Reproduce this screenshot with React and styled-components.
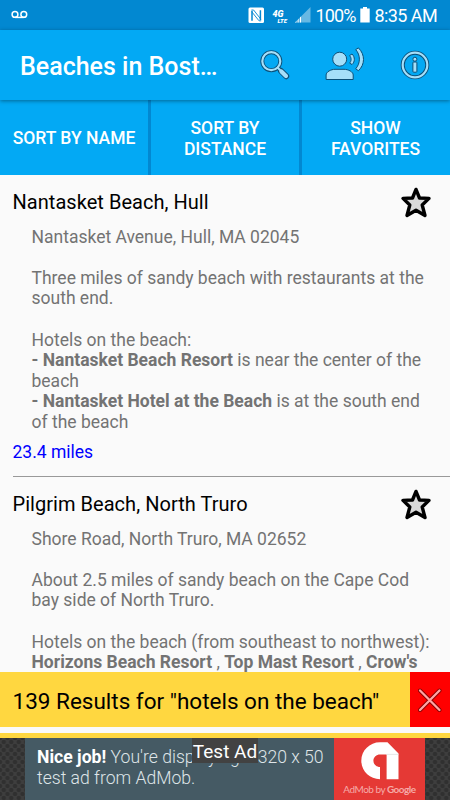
import styled, { createGlobalStyle } from "styled-components";

const beaches = [
  {
    name: "Nantasket Beach, Hull",
    lines: [
      "Nantasket Avenue, Hull, MA 02045",
      "",
      "Three miles of sandy beach with restaurants at the",
      "south end.",
      "",
      "Hotels on the beach:",
      <><b>- Nantasket Beach Resort</b> is near the center of the</>,
      "beach",
      <><b>- Nantasket Hotel at the Beach</b> is at the south end</>,
      "of the beach",
    ],
    distance: "23.4 miles",
  },
  {
    name: "Pilgrim Beach, North Truro",
    lines: [
      "Shore Road, North Truro, MA 02652",
      "",
      "About 2.5 miles of sandy beach on the Cape Cod",
      "bay side of North Truro.",
      "",
      "Hotels on the beach (from southeast to northwest):",
      <><b>Horizons Beach Resort</b> , <b>Top Mast Resort</b> , <b>Crow's</b></>,
    ],
  },
];

export default function App() {
  return (
    <Screen>
      <GlobalStyle />
      <StatusBar>
        <Voicemail />
        <StatusIcons>
          <Nfc />
          <Network><span>4G</span><span>LTE</span></Network>
          <Signal />
          <Percent>100%</Percent>
          <Battery />
          <Clock>8:35 AM</Clock>
        </StatusIcons>
      </StatusBar>
      <AppBar>
        <Title>Beaches in Bost…</Title>
        <SearchIcon />
        <VoiceIcon />
        <InfoIcon />
      </AppBar>
      <Tabs>
        <Tab>SORT BY NAME</Tab>
        <Tab>SORT BY<br />DISTANCE</Tab>
        <Tab>SHOW<br />FAVORITES</Tab>
      </Tabs>
      <List>
        {beaches.map((beach) => (
          <Item key={beach.name}>
            <ItemHead>
              <Name>{beach.name}</Name>
              <Star />
            </ItemHead>
            <Details>
              {beach.lines.map((line, index) => (
                <Line key={index}>{line}</Line>
              ))}
            </Details>
            {beach.distance && <Distance>{beach.distance}</Distance>}
          </Item>
        ))}
      </List>
      <Results>
        <ResultText>139 Results for "hotels on the beach"</ResultText>
        <Close><CloseIcon /></Close>
      </Results>
      <Strip />
      <AdArea>
        <Ad>
          <AdText>
            <p><b>Nice job!</b> You're displaying a 320 x 50</p>
            <p>test ad from AdMob.</p>
          </AdText>
          <AdLogo>
            <AdMobIcon />
            <AdBrand>AdMob by <b>Google</b></AdBrand>
          </AdLogo>
        </Ad>
        <TestLabel>Test Ad</TestLabel>
      </AdArea>
    </Screen>
  );
}

function Voicemail() {
  return (
    <svg width="18" height="10" viewBox="0 0 18 10" fill="none" stroke="#fff" strokeWidth="1.5">
      <circle cx="4" cy="4.4" r="2.9" />
      <circle cx="12.8" cy="4.4" r="2.9" />
      <path d="M4 7.4H12.8" />
    </svg>
  );
}

function Nfc() {
  return (
    <svg width="17" height="17" viewBox="0 0 17 17">
      <rect x="0.5" y="0.5" width="15.5" height="15.5" rx="1.5" fill="#fff" />
      <path d="M4 13.8V3.8M12.4 3.2V13" fill="none" stroke="#0288d1" strokeWidth="1.5" />
      <path d="M3.4 3H5.6L12.8 12.2M3.7 4.7L11 13.8H13.2" fill="none" stroke="#0288d1" strokeWidth="0.9" />
    </svg>
  );
}

function Signal() {
  return (
    <svg width="16" height="16" viewBox="0 0 16 16">
      <path d="M0 15.5L15.5 0V15.5Z" fill="#67b8e3" />
      <path d="M0 15.5L6 9.5V15.5Z" fill="#fff" />
      <path d="M2 11V16M4.2 9V16" stroke="#0288d1" strokeWidth="0.9" />
    </svg>
  );
}

function Battery() {
  return (
    <svg width="10" height="16" viewBox="0 0 10 16">
      <path d="M3 0H7V1.5H9.7V15.5H0.3V1.5H3Z" fill="#fff" />
    </svg>
  );
}

function SearchIcon() {
  return (
    <svg width="30" height="30" viewBox="0 0 30 30" fill="none" strokeLinecap="round">
      <path d="M21 21L26.2 26.2" stroke="#0b4f78" strokeWidth="6" />
      <path d="M17.5 17.5L20.5 20.5" stroke="#0b4f78" strokeWidth="4" />
      <circle cx="11.3" cy="11.2" r="9" stroke="#0b4f78" strokeWidth="4" />
      <circle cx="11.3" cy="11.2" r="9" stroke="#a5dff9" strokeWidth="2.2" />
      <path d="M17.8 17.8L20.5 20.5" stroke="#a5dff9" strokeWidth="2" />
      <path d="M21.4 21.4L26 26" stroke="#a5dff9" strokeWidth="4.2" />
    </svg>
  );
}

function VoiceIcon() {
  return (
    <svg width="40" height="34" viewBox="0 0 40 34" fill="#a5dff9" stroke="#0b4f78">
      <circle cx="14.7" cy="12.2" r="7" />
      <path d="M1.1 32.5V28C1.1 24.8 6.2 22.3 10 22.3H19C23.2 22.3 28.2 24.8 28.2 28V32.5Z" />
      <path d="M24.6 8.6L27 7C30.1 10 30.1 14.9 27 17.5L24.6 16.1C26.6 14 26.6 10.9 24.6 8.6Z" />
      <path d="M30.7 2.6L33.4 0.9C40.3 7.5 40.1 17.7 33.4 23.7L30.7 21.8C35.6 16.3 35.6 8 30.7 2.6Z" />
    </svg>
  );
}

function InfoIcon() {
  return (
    <svg width="30" height="30" viewBox="0 0 30 30" fill="none">
      <circle cx="15" cy="15" r="12.3" stroke="#0b4f78" strokeWidth="4" />
      <circle cx="15" cy="15" r="12.3" stroke="#a5dff9" strokeWidth="2.2" />
      <rect x="12.9" y="12" width="4" height="10.2" rx="0.8" fill="#a5dff9" stroke="#0b4f78" />
      <circle cx="14.9" cy="9.2" r="2" fill="#a5dff9" stroke="#0b4f78" />
    </svg>
  );
}

function Star() {
  return (
    <svg width="32" height="32" viewBox="0 0 32 32">
      <path
        d="M16 3.4L19.5 12L29 12.4L22.2 19L25 29.5L16 24.2L7 29.5L9.8 19L3 12.4L12.5 12Z"
        fill="#d9d9d9" stroke="#000" strokeWidth="3.4" strokeLinejoin="round"
      />
    </svg>
  );
}

function CloseIcon() {
  return (
    <svg width="24" height="24" viewBox="0 0 24 24" strokeLinecap="round">
      <path d="M2 2.5L21.5 22M21.5 2.5L2 22" stroke="#850000" strokeWidth="4" />
      <path d="M2 2.5L21.5 22M21.5 2.5L2 22" stroke="#ffa5a5" strokeWidth="2.3" />
    </svg>
  );
}

function AdMobIcon() {
  return (
    <svg width="38" height="38" viewBox="0 0 38 38">
      <path
        d="M19 0.3H26.5L37.5 11.5V37.2H25.6V12.4H19C15.5 12.4 12.4 15 12.4 18.7C12.4 22.2 15.3 25 19 25V37.2C8.7 37.2 0.3 29 0.3 18.7C0.3 8.5 8.7 0.3 19 0.3Z"
        fill="#fff"
      />
      <path d="M25.6 12.4H37.5" stroke="#ddd" strokeWidth="0.7" />
    </svg>
  );
}

const GlobalStyle = createGlobalStyle`
  * {
    box-sizing: border-box;
  }

  body {
    margin: 0;
    font-family: Roboto, sans-serif;
  }

  p {
    margin: 0;
  }

  svg {
    flex-shrink: 0;
    display: block;
  }
`;

const Screen = styled.div`
  width: 450px;
  height: 800px;
  display: flex;
  flex-direction: column;
  overflow: hidden;
  background: #fafafa;
  white-space: nowrap;
`;

const StatusBar = styled.div`
  height: 30px;
  flex-shrink: 0;
  display: flex;
  align-items: center;
  justify-content: space-between;
  padding: 0 13px 0 11px;
  background: #0288d1;
  color: #fff;
`;

const StatusIcons = styled.div`
  display: flex;
  align-items: center;
`;

const Network = styled.div`
  width: 16px;
  margin: 3px 6px 0 8px;
  display: flex;
  flex-direction: column;
  font-size: 9px;
  font-weight: 900;
  font-style: italic;
  line-height: 8px;

  & > span:last-child {
    font-size: 6px;
    line-height: 6px;
    padding-left: 5px;
  }
`;

const Percent = styled.span`
  width: 41px;
  margin: 0 3px 0 5px;
  font-size: 18px;
  letter-spacing: -0.9px;
`;

const Clock = styled.span`
  margin-left: 5px;
  font-size: 18px;
  letter-spacing: -0.6px;
`;

const AppBar = styled.div`
  height: 70px;
  flex-shrink: 0;
  display: flex;
  align-items: center;
  padding: 0 20px;
  background: #03a9f4;
  box-shadow: 0 1px 4px rgba(0, 0, 0, 0.4);
  z-index: 1;

  & > svg:nth-of-type(1) {
    margin-right: 35px;
  }

  & > svg:nth-of-type(2) {
    margin-right: 35px;
    margin-top: -2px;
  }
`;

const Title = styled.h1`
  width: 240px;
  margin: 2px 0 0;
  font-size: 25px;
  font-weight: 500;
  color: #fff;
`;

const Tabs = styled.div`
  height: 75px;
  flex-shrink: 0;
  display: flex;
`;

const Tab = styled.div`
  width: 151px;
  display: flex;
  align-items: center;
  justify-content: center;
  text-align: center;
  padding-top: 2px;
  background: #03a9f4;
  border-right: 3px solid #0288d1;
  color: #fff;
  font-size: 17.5px;
  font-weight: 500;
  line-height: 20.6px;

  &:last-child {
    width: 148px;
    padding-right: 1px;
    border-right: none;
  }
`;

const List = styled.div`
  height: 497px;
  flex-shrink: 0;
  overflow: hidden;
`;

const Item = styled.div`
  height: 302px;
  margin-left: 12.5px;
  border-bottom: 1px solid #999;
`;

const ItemHead = styled.div`
  height: 51.6px;
  display: flex;
  justify-content: space-between;
  padding: 11px 18px 0 0;
`;

const Name = styled.div`
  padding-top: 4px;
  font-size: 20px;
  line-height: 24px;
  letter-spacing: 0.04px;
  color: #000;
`;

const Details = styled.div`
  padding-left: 19px;
  color: #737373;
  font-size: 17.5px;
`;

const Line = styled.div`
  height: 20.6px;
  line-height: 20.6px;
`;

const Distance = styled.div`
  margin-top: 9.4px;
  font-size: 17.5px;
  line-height: 21px;
  color: #0000ff;
`;

const Results = styled.div`
  height: 55px;
  flex-shrink: 0;
  display: flex;
  background: #ffd740;
`;

const ResultText = styled.div`
  flex: 1;
  padding: 2px 0 0 12.5px;
  font-size: 22.5px;
  line-height: 55px;
  color: #000;
`;

const Close = styled.div`
  width: 40px;
  display: flex;
  align-items: center;
  justify-content: center;
  background: #ff0000;
`;

const Strip = styled.div`
  height: 11px;
  flex-shrink: 0;
  border-top: 6px solid #fafafa;
  background: #ffd740;
`;

const AdArea = styled.div`
  height: 62px;
  flex-shrink: 0;
  position: relative;
  display: flex;
  justify-content: center;
  background-color: #3e3e3e;
  background-image: radial-gradient(circle, #303030 1.8px, transparent 2.6px),
    radial-gradient(circle, #303030 1.8px, transparent 2.6px);
  background-size: 7.5px 8px;
  background-position: 0 0, 3.75px 4px;
`;

const Ad = styled.div`
  width: 400px;
  display: flex;
  background: #455a64;
`;

const AdText = styled.div`
  width: 309px;
  padding: 9px 0 0 12px;
  font-size: 17.6px;
  font-weight: 300;
  line-height: 21px;
  color: #dfe5e8;

  & b {
    font-weight: 700;
    color: #fff;
  }
`;

const AdLogo = styled.div`
  width: 91px;
  display: flex;
  flex-direction: column;
  align-items: center;
  padding-top: 4px;
  background: #e53935;
`;

const AdBrand = styled.div`
  margin-top: 3px;
  font-family: Lato, sans-serif;
  font-size: 10px;
  line-height: 13px;
  letter-spacing: -0.5px;
  color: #f5aaa8;

  & b {
    font-weight: 700;
  }
`;

const TestLabel = styled.div`
  position: absolute;
  top: 0;
  left: 192px;
  width: 66px;
  height: 25px;
  text-align: center;
  font-size: 19px;
  line-height: 27px;
  color: #fff;
  background: #424242;
`;
